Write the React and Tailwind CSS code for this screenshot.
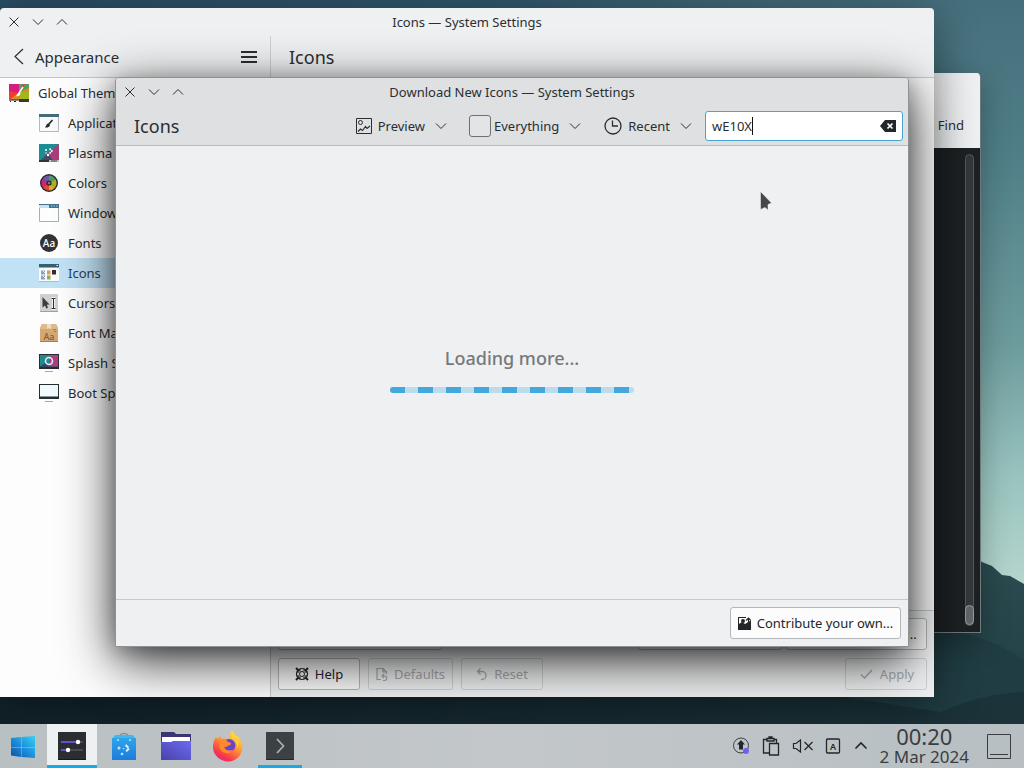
import { useState } from 'react';

function Stroke({ d, className = 'size-4', width = 1, viewBox = '0 0 16 16' }) {
  return (
    <svg viewBox={viewBox} className={className} fill="none" stroke="currentColor" strokeWidth={width} aria-hidden="true">
      <path d={d} />
    </svg>
  );
}

const CHEVRON_DOWN = 'M3 5.5l5 5 5-5';

function Wallpaper() {
  return (
    <svg className="absolute inset-0 size-full" viewBox="0 0 1024 768" preserveAspectRatio="none" aria-hidden="true">
      <defs>
        <linearGradient id="sky" x1="0" y1="0" x2="0" y2="1">
          <stop offset="0" stopColor="#456f7c" />
          <stop offset="0.2" stopColor="#4f7e87" />
          <stop offset="0.45" stopColor="#6d9c9d" />
          <stop offset="0.62" stopColor="#98c3be" />
          <stop offset="0.78" stopColor="#b9d8d0" />
        </linearGradient>
        <linearGradient id="dusk" x1="0" y1="0" x2="1" y2="0">
          <stop offset="0" stopColor="#2a4c63" />
          <stop offset="0.5" stopColor="#2e5369" stopOpacity="0.9" />
          <stop offset="0.95" stopColor="#426a78" stopOpacity="0" />
        </linearGradient>
        <linearGradient id="hill" x1="0" y1="0" x2="0" y2="1">
          <stop offset="0" stopColor="#2b4c50" />
          <stop offset="1" stopColor="#1f3b41" />
        </linearGradient>
        <linearGradient id="ground" x1="0" y1="0" x2="1" y2="0">
          <stop offset="0" stopColor="#12222a" />
          <stop offset="1" stopColor="#1b3339" />
        </linearGradient>
      </defs>
      <rect width="1024" height="768" fill="url(#sky)" />
      <rect width="1024" height="300" fill="url(#dusk)" />
      <path d="M0 600 960 545l22 17 10 4 10 9 8 1 14 8v184H0z" fill="url(#hill)" />
      <path d="M0 640 900 636q40-12 74 0t50 24v108H0z" fill="#203d43" />
      <path d="M0 690h800l140 22q40-18 84-20v76H0z" fill="url(#ground)" />
    </svg>
  );
}

function TitleBar({ title }) {
  return (
    <div className="grid h-7 shrink-0 grid-cols-[1fr_auto_1fr] items-center text-[#2b2f33]">
      <div className="flex pl-0.5">
        <button type="button" aria-label="Close" className="flex w-6 justify-center">
          <Stroke d="m3.5 3.5 9 9m0-9-9 9" />
        </button>
        <button type="button" aria-label="Minimize" className="flex w-6 justify-center">
          <Stroke d={CHEVRON_DOWN} />
        </button>
        <button type="button" aria-label="Maximize" className="flex w-6 justify-center">
          <Stroke d="M3 10.500l5-5 5 5" />
        </button>
      </div>
      <h1>{title}</h1>
    </div>
  );
}

/* Sidebar artwork, all on a 20x18 grid */
function GlobalThemeIcon() {
  return (
    <svg viewBox="0 0 20 18" className="w-5">
      <path d="M0 0h10v9H0z" fill="#d41d7c" />
      <path d="M10 0h10v9H10z" fill="#5a9c5e" />
      <path d="M0 18V7l10 2 4-9h2l-5 9v6H0z" fill="#f03b30" />
      <path d="M0 16 11 8l9-4v14H0z" fill="#dd8a23" />
      <path d="M11 8h9v10h-9z" fill="#a5b51d" />
      <path d="M0 16h10v2H0z" fill="#fff" />
      <path d="M0 16h10" stroke="#2d1b17" />
      <path d="M10 15h10v3H10z" fill="#3d3a16" />
      <path d="M1 17.500h1m3 0h2" stroke="#2d1b17" />
      <path d="m14 3-4 6" stroke="#fff" strokeWidth="1.5" />
      <path d="M10.500 8.500c-2 0-2 2-3.500 3.500 2 .5 4 0 4.500-2.500z" fill="#fff" />
    </svg>
  );
}

function StyleIcon() {
  return (
    <svg viewBox="0 0 20 18" className="w-5">
      <path d="M.5.5h19v17H.5z" fill="#f8f9fa" stroke="#b6babd" />
      <path d="M0 0h20v3H0z" fill="#456c7b" />
      <path d="m13.500 6-4 4.500" stroke="#26292c" strokeWidth="1.700" />
      <path d="M9.500 9.500c-2 0-2 2-3.500 4 2.500.3 4.500-.5 5-2.500z" fill="#26292c" />
    </svg>
  );
}

function PlasmaIcon() {
  return (
    <svg viewBox="0 0 20 18" className="w-5">
      <path d="M0 0h20v18H0z" fill="#1c8d92" />
      <path d="M20 0v18H9l-3-7z" fill="#a83f78" />
      <path d="M0 18 9 9l6 9z" fill="#444a66" />
      <path d="M0 16h20v2H0z" fill="#31333d" />
      <path d="M10 16h10v2H10z" fill="#c9c3cd" />
      <path d="M12 17h6" stroke="#3d3f48" />
      <g fill="#fff">
        <circle cx="7" cy="6" r="1" />
        <circle cx="9" cy="11" r="1.200" />
        <circle cx="7" cy="9" r=".7" />
      </g>
      <path d="m10.500 4.500 2.500 2.500-2.500 2.500" fill="none" stroke="#fff" strokeWidth="1.500" strokeDasharray="2 .6" />
    </svg>
  );
}

function ColorsIcon() {
  return (
    <svg viewBox="0 0 20 18" className="w-5">
      <circle cx="10" cy="9" r="9" fill="#2b2b2f" />
      <path d="M10 9V1.500a7.500 7.500 0 0 1 6.500 3.800z" fill="#4b9b60" />
      <path d="m10 9 6.500-3.700a7.500 7.500 0 0 1 0 7.500z" fill="#a9b32a" />
      <path d="m10 9 6.500 3.800A7.500 7.500 0 0 1 10 16.500z" fill="#e0a726" />
      <path d="M10 9v7.500a7.500 7.500 0 0 1-6.500-3.700z" fill="#e1472e" />
      <path d="m10 9-6.500 3.800a7.500 7.500 0 0 1 0-7.500z" fill="#cf2380" />
      <path d="M10 9 3.500 5.300A7.500 7.500 0 0 1 10 1.500z" fill="#6f57a6" />
      <circle cx="10" cy="9" r="2.600" fill="#2b2b2f" />
      <circle cx="10" cy="9" r="1.200" fill="#89786f" />
    </svg>
  );
}

function WindowIcon() {
  return (
    <svg viewBox="0 0 20 18" className="w-5">
      <path d="M.5.5h19v17H.5z" fill="#fcfdfd" stroke="#a9adb5" />
      <path d="M0 0h20v4H0z" fill="#c6e2ef" />
      <path d="M0 0h10v1H0zM10 0h10v4H10z" fill="#3f7592" />
      <path d="M12 2h1.500m1 0H16m1 0h1.500" stroke="#a9cbdc" />
    </svg>
  );
}

function FontsIcon() {
  return (
    <svg viewBox="0 0 20 18" className="w-5">
      <circle cx="10" cy="9" r="9" fill="#313336" />
      <text x="10" y="12.500" textAnchor="middle" fontSize="10" fontWeight="500" fill="#fff">Aa</text>
    </svg>
  );
}

function IconsIcon() {
  return (
    <svg viewBox="0 0 20 18" className="w-5">
      <path d="M0 0h20v17H0z" fill="#f9fafa" />
      <path d="M0 0h20v3.500H0z" fill="#35606f" />
      <path d="M17.500 1.500h1.500" stroke="#fff" />
      <path d="M2 6.500h4v4H2zm0 5h4v4H2z" fill="#8c9fc4" />
      <path d="m3.500 6.500 2.500 2.500m-2.500 2.500L6 14" stroke="#dfe6f2" />
      <path d="M8 6.500h3.500v4H8z" fill="#d89c57" />
      <path d="M8 11.500h3.500v4H8z" fill="#88b34c" />
      <path d="M13 6h4v4.500h-4z" fill="#3a2932" />
      <path d="M0 17.500h20" stroke="#abc0cc" />
    </svg>
  );
}

function CursorsIcon() {
  return (
    <svg viewBox="0 0 20 18" className="w-5">
      <rect x="1" width="18" height="18" rx="1" fill="#cfd0d2" />
      <path d="M1 17.500h18" stroke="#9fa1a4" />
      <path d="m3.500 3 7 7.500-2.700.3 1.200 3-1.800.7-1.200-3-2.500 2z" fill="#393c40" />
      <path d="M12.500 4.500h4m-4 10h4m-2-10v10" stroke="#fff" strokeWidth="2.500" />
      <path d="M12.500 4.500h4m-4 10h4m-2-10v10" stroke="#2a2c2f" />
    </svg>
  );
}

function FontBoxIcon() {
  return (
    <svg viewBox="0 0 20 18" className="w-5">
      <path d="M3 0h14l2 4v14H1V4z" fill="#d5a775" />
      <path d="M3 0h14l2 5H1z" fill="#dfb98c" />
      <path d="M8 0h4v5l-2-1-2 1z" fill="#f0dcc1" />
      <path d="M1 17.500h18" stroke="#a67e50" />
      <text x="10" y="15.500" textAnchor="middle" fontSize="9" fontWeight="500" fill="#815d3b">Aa</text>
      <path d="M14 5.500h3m-2 2h2" stroke="#a67e50" />
    </svg>
  );
}

function SplashIcon() {
  return (
    <svg viewBox="0 0 20 18" className="w-5">
      <path d="M0 0h20v15H0z" fill="#292c34" />
      <path d="M1 1h18v11.500H1z" fill="#24898b" />
      <path d="M12 1h7v11.500H9z" fill="#b03e80" />
      <path d="m1 12.500 6-4 5 4z" fill="#3d3f6b" />
      <circle cx="10" cy="7" r="3.500" fill="none" stroke="#e8f0f4" strokeWidth="1.500" />
      <path d="M6 17.500h8" stroke="#a4a7ab" />
    </svg>
  );
}

function BootIcon() {
  return (
    <svg viewBox="0 0 20 18" className="w-5">
      <path d="M0 0h20v15H0z" fill="#272d32" />
      <path d="M1 1h18v11.500H1z" fill="#f0fafa" />
      <path d="M6 17.500h8" stroke="#a4a7ab" />
    </svg>
  );
}

const PAGES = [
  { name: 'Application Style', Icon: StyleIcon },
  { name: 'Plasma Style', Icon: PlasmaIcon },
  { name: 'Colors', Icon: ColorsIcon },
  { name: 'Window Decorations', Icon: WindowIcon },
  { name: 'Fonts', Icon: FontsIcon },
  { name: 'Icons', Icon: IconsIcon },
  { name: 'Cursors', Icon: CursorsIcon },
  { name: 'Font Management', Icon: FontBoxIcon },
  { name: 'Splash Screen', Icon: SplashIcon },
  { name: 'Boot Splash Screen', Icon: BootIcon },
];

function Sidebar() {
  return (
    <nav className="flex w-[270px] shrink-0 flex-col overflow-hidden bg-[#fdfdfd]">
      <a href="#global" className="flex h-[30px] items-center gap-[9px] pl-[9px]">
        <GlobalThemeIcon />
        Global Theme
      </a>
      {PAGES.map(({ name, Icon }) => (
        <a
          key={name}
          href="#page"
          className={`flex h-[30px] items-center gap-[9px] pl-[39px] ${
            name === 'Icons' ? 'bg-[#c1e1f4] text-[#1d3f5e]' : ''
          }`}
        >
          <Icon />
          {name}
        </a>
      ))}
    </nav>
  );
}

function Button({ children, disabled, className = '' }) {
  return (
    <button
      type="button"
      disabled={disabled}
      className={`flex h-8 items-center justify-center gap-1.5 rounded-[3px] border ${
        disabled ? 'border-[#ced0d2] text-[#a7a9ab]' : 'border-[#b4b7b9] bg-[#fcfcfc] text-[#232629]'
      } ${className}`}
    >
      {children}
    </button>
  );
}

function HelpIcon() {
  return (
    <svg viewBox="0 0 14 14" className="size-3.5" fill="none" stroke="currentColor" aria-hidden="true">
      <circle cx="7" cy="7" r="5.500" strokeWidth="1.200" />
      <circle cx="7" cy="7" r="2.500" />
      <path d="m1 1 3 3m9-3-3 3M1 13l3-3m9 3-3-3" strokeWidth="2" />
      <path d="M5 1.500v3m4-3v3M5 9.500v3m4-3v3M1.500 5h3m-3 4h3m5-4h3m-3 4h3" />
    </svg>
  );
}

function SettingsWindow() {
  return (
    <section className="absolute top-2 right-[90px] bottom-[27px] left-0 flex flex-col overflow-hidden rounded-t-[4px] bg-[#eff0f1] shadow-[0_8px_44px_rgba(0,0,0,0.4)]">
      <TitleBar title="Icons — System Settings" />
      <header className="flex h-[42px] shrink-0 items-stretch border-b border-[#c4c6c8]">
        <div className="flex w-[270px] items-center pr-[13px] pl-[11px]">
          <button type="button" className="flex items-center gap-2 text-[15px]">
            <Stroke d="M12 1 4 8.500l8 7.500" viewBox="0 0 16 17" width={1.2} className="h-[17px] w-4" />
            Appearance
          </button>
          <button type="button" aria-label="Menu" className="ml-auto">
            <Stroke d="M0 3h16M0 8h16M0 13h16" width={2} />
          </button>
        </div>
        <h2 className="flex flex-1 items-center border-l border-[#cdcfd1] pl-[18px] text-lg">Icons</h2>
      </header>
      <div className="flex min-h-0 flex-1">
        <Sidebar />
        <div className="flex flex-1 flex-col border-l border-[#c4c6c8]">
          <div className="flex-1 bg-[#f7f7f7]" />
          <footer className="flex flex-col gap-2 border-t border-[#c4c6c8] px-[7px] py-[7px]">
            <div className="flex gap-1">
              <Button className="w-[164px]">Configure Icon Sizes</Button>
              <Button className="ml-auto w-[144px]">Install from File...</Button>
              <Button className="w-[141px]">
                <Stroke d="M8 2v8M4.500 7 8 10.500 11.500 7M2 13.500h12" />
                Get New Icons...
              </Button>
            </div>
            <div className="flex gap-2">
              <Button className="w-[82px]">
                <HelpIcon />
                Help
              </Button>
              <Button disabled className="w-[85px]">
                <svg viewBox="0 0 12 14" className="w-3" fill="none" stroke="currentColor" strokeWidth="1.200" aria-hidden="true">
                  <path d="M5 12.500H1v-11h6l3.500 3.500v2M7 1.500V5h3.500" />
                  <path d="M7 13.500h1.500a2 2 0 0 0 0-4.500H6m2-2L6 9l2 2" />
                </svg>
                Defaults
              </Button>
              <Button disabled className="w-[82px]">
                <svg viewBox="0 0 12 14" className="w-3" fill="none" stroke="currentColor" strokeWidth="1.300" aria-hidden="true">
                  <path d="M4.500 1.500 1.500 4.500l3 3M1.500 4.500H6a4 4 0 0 1 0 8H5" />
                </svg>
                Reset
              </Button>
              <Button disabled className="ml-auto w-[82px]">
                <Stroke d="m3 8.500 3.500 3.500L14 4" width={1.5} />
                Apply
              </Button>
            </div>
          </footer>
        </div>
      </div>
    </section>
  );
}

function TerminalWindow() {
  return (
    <section className="absolute top-[73px] right-[43px] bottom-[91px] left-[188px] flex flex-col overflow-hidden rounded-t-[4px] border-r border-b border-[#6f7b7c] bg-[#1d2123] shadow-[0_8px_30px_rgba(0,0,0,0.3)]">
      <header className="flex h-[75px] shrink-0 items-end justify-end bg-[#eff0f1] pr-4 pb-[13px]">
        <button type="button">Find</button>
      </header>
      <div className="flex flex-1 justify-end pt-1.5 pr-1.5 pb-1.5">
        <div className="flex w-[9px] flex-col justify-end rounded-full border border-[#54585a] bg-[#34383a]">
          <div className="-mx-px h-5 rounded-full border border-[#989b9c] bg-[#62676a]" />
        </div>
      </div>
    </section>
  );
}

function DownloadDialog() {
  const [query, setQuery] = useState('wE10X');
  const [everything, setEverything] = useState(false);

  return (
    <section className="absolute inset-x-[115px] top-[77px] bottom-[77px] flex flex-col overflow-hidden rounded-t-[4px] border border-[#8f9294] bg-[#eff0f1] shadow-[0_14px_52px_rgba(0,0,0,0.8),0_4px_20px_rgba(0,0,0,0.25)]">
      <div className="shrink-0 border-b border-[#b9bbbd] bg-[#dee0e2]">
        <TitleBar title="Download New Icons — System Settings" />
        <div className="flex h-[39px] items-center pr-[5px] pl-[18px]">
          <h2 className="mr-auto text-lg">Icons</h2>
          <button type="button" className="flex items-center gap-1.5">
            <svg viewBox="0 0 16 16" className="size-4" fill="none" stroke="currentColor" aria-hidden="true">
              <path d="M.5.5h15v15H.5z" />
              <circle cx="4.500" cy="4.500" r="2" />
              <path d="M2 13.500 4.500 11l2 1.500 3-4 1.500 2 3-2.500" strokeWidth="1.200" />
            </svg>
            Preview
            <Stroke d={CHEVRON_DOWN} className="ml-0.5 size-4" />
          </button>
          <div className="ml-5 flex items-center gap-1.5">
            <label className="flex items-center gap-[3px]">
              <input
                type="checkbox"
                checked={everything}
                onChange={(e) => setEverything(e.target.checked)}
                className="size-[22px] appearance-none rounded-[3px] border border-[#6d7173] bg-[#e2e4e5] checked:bg-[#3daee9]"
              />
              Everything
            </label>
            <button type="button" aria-label="Category" className="ml-0.5">
              <Stroke d={CHEVRON_DOWN} />
            </button>
          </div>
          <button type="button" className="ml-[21px] flex items-center gap-1.5">
            <svg viewBox="0 0 18 18" className="size-[18px]" fill="none" stroke="currentColor" strokeWidth="1.300" aria-hidden="true">
              <circle cx="9" cy="9" r="8" />
              <path d="M8.500 3.500V9H14" />
            </svg>
            Recent
            <Stroke d={CHEVRON_DOWN} className="ml-0.5 size-4" />
          </button>
          <div className="ml-[11px] flex h-[30px] w-[198px] items-center rounded-[3px] border border-[#48a5d6] bg-white px-1.5">
            <input
              type="text"
              aria-label="Search"
              value={query}
              onChange={(e) => setQuery(e.target.value)}
              className="field-sizing-content min-w-0 caret-transparent outline-none"
            />
            <span className="h-[18px] w-px bg-[#111]" />
            <button type="button" aria-label="Clear" className="ml-auto">
              <svg viewBox="0 0 16 12" className="w-4" aria-hidden="true">
                <path d="M5 0h11v12H5L0 6z" fill="#232629" />
                <path d="m7.500 3.500 5 5m0-5-5 5" stroke="#fff" strokeWidth="1.700" />
              </svg>
            </button>
          </div>
        </div>
      </div>

      <div className="flex flex-1 flex-col items-center justify-center gap-[17px] pb-1.5">
        <p className="text-lg leading-6 font-medium text-[#76797b]">Loading more...</p>
        <div
          role="progressbar"
          aria-label="Loading more"
          className="h-1.5 w-[244px] rounded-full bg-[repeating-linear-gradient(90deg,#45a8dc_0px,#45a8dc_15px,#bcdcee_15px,#bcdcee_28px)]"
        />
      </div>

      <footer className="flex h-[47px] shrink-0 items-center justify-end border-t border-[#c6c8ca] pr-[7px]">
        <Button className="w-[171px]">
          <svg viewBox="0 0 13 13" className="size-[13px]" aria-hidden="true">
            <path d="M0 0h8v1H1v6l3-2 3 2 5-3h1v9H0z" fill="currentColor" />
            <circle cx="5" cy="4" r="2" fill="currentColor" />
            <path d="M10.500 7V1M8 3.500 10.500 1 13 3.500" fill="none" stroke="currentColor" strokeWidth="1.200" />
          </svg>
          Contribute your own...
        </Button>
      </footer>
    </section>
  );
}

function StartIcon() {
  return (
    <svg viewBox="0 0 24 22" className="w-6">
      <defs>
        <linearGradient id="start" x1="0" y1="1" x2="1" y2="0">
          <stop offset="0" stopColor="#0a4fa0" />
          <stop offset="0.5" stopColor="#1e8fdc" />
          <stop offset="1" stopColor="#36d0f2" />
        </linearGradient>
      </defs>
      <path d="m0 2 10-1v10H0zm10.500-1L24 0v11H10.500zM0 11.500h10V21L0 19.500zm10.500 0H24V22l-13.500-1z" fill="url(#start)" />
    </svg>
  );
}

function SlidersIcon() {
  return (
    <svg viewBox="0 0 28 28" className="size-7">
      <path d="M0 0h28v28H0z" fill="#2c2d32" />
      <path d="M0 27.500h28" stroke="#18191c" />
      <path d="M3 10h17" stroke="#5b56c9" strokeWidth="2" />
      <path d="M20 10h5M10 18h15" stroke="#66686c" />
      <path d="M3 18h7" stroke="#5b56c9" strokeWidth="2" />
      <circle cx="20" cy="10" r="2.200" fill="#fff" />
      <circle cx="10" cy="18" r="2.200" fill="#fff" />
    </svg>
  );
}

function DiscoverIcon() {
  return (
    <svg viewBox="0 0 28 28" className="size-7">
      <defs>
        <linearGradient id="bag" x1="0" y1="0" x2="0" y2="1">
          <stop offset="0" stopColor="#2fa5ea" />
          <stop offset="1" stopColor="#1d7bdc" />
        </linearGradient>
      </defs>
      <path d="M8 6c1-6 11-6 12 0" fill="none" stroke="#75868f" />
      <path d="m3 6 2-3h18l2 3z" fill="#42b6ee" />
      <path d="M2 6h24v22H2z" fill="url(#bag)" />
      <path d="m15.500 13 3.500 3.500-3.500 3.500" fill="none" stroke="#d8f1ff" strokeWidth="2" strokeDasharray="4 1" />
      <g fill="#bfe5fb">
        <circle cx="9" cy="16" r="1.500" />
        <circle cx="12" cy="22" r="1.300" />
        <circle cx="13.500" cy="16.500" r=".8" />
        <circle cx="8" cy="8" r="1" />
        <circle cx="20" cy="8" r="1" />
      </g>
    </svg>
  );
}

function FolderIcon() {
  return (
    <svg viewBox="0 0 30 28" className="w-[30px]">
      <defs>
        <linearGradient id="folder" x1="0" y1="1" x2="1" y2="0">
          <stop offset="0" stopColor="#4743a8" />
          <stop offset="1" stopColor="#6d6af2" />
        </linearGradient>
      </defs>
      <path d="M0 0h13l2 2h15v12H0z" fill="#393575" />
      <path d="M1 5h28v7H1z" fill="#fff" />
      <path d="M0 10h10l2-1h18v19H0z" fill="url(#folder)" />
    </svg>
  );
}

function FirefoxIcon() {
  return (
    <svg viewBox="0 0 32 32" className="size-8">
      <defs>
        <linearGradient id="fox" x1="0.8" y1="0" x2="0.2" y2="1">
          <stop offset="0" stopColor="#ffe94a" />
          <stop offset="0.45" stopColor="#ff9330" />
          <stop offset="0.8" stopColor="#f8354e" />
          <stop offset="1" stopColor="#e0257f" />
        </linearGradient>
      </defs>
      <path d="M20 .5c2 2 3 4 3.500 6.500L26 6c4 5 6 12 3 17.500C26 29 21 31.500 16 31.500 8 31.500 1 25 1 17c0-4 1-7 3-10l1.500 2L8 6l2 3c3-1 5-.5 7 1 0-4 1-7 3-9.500z" fill="url(#fox)" />
      <circle cx="17" cy="15.500" r="6.500" fill="#6e42c9" />
      <path d="M10 9c3 0 5 1 6 3 2 0 3 1 3 2-1 2-3 1-4 2.500-1 1-2 1-3 0 1 4 5 5 9 3-2 5-11 5-13-1-1-3 0-6 2-9.500z" fill="#ff8a2c" />
      <path d="M19 8c4 1 7 5 6 10 4-6 1-12-4-15z" fill="#ffd23c" />
    </svg>
  );
}

function TerminalIcon() {
  return (
    <svg viewBox="0 0 28 28" className="size-7">
      <path d="M0 0h28v28H0z" fill="#3c4144" />
      <path d="M0 27.500h28" stroke="#24282a" />
      <path d="m11 7 6.500 7-6.500 7" fill="none" stroke="#aeb2b4" strokeWidth="1.700" />
    </svg>
  );
}

const TASKS = [
  { name: 'System Settings', Icon: SlidersIcon, state: 'bg-[#eef1f2] border-[#17a9e8]' },
  { name: 'Discover', Icon: DiscoverIcon, state: 'border-transparent' },
  { name: 'Files', Icon: FolderIcon, state: 'border-transparent' },
  { name: 'Firefox', Icon: FirefoxIcon, state: 'border-transparent' },
  { name: 'Terminal', Icon: TerminalIcon, state: 'border-[#17a9e8]' },
];

function Taskbar() {
  return (
    <div className="relative flex h-11 shrink-0 items-stretch bg-linear-to-r from-[#b9c0c2] via-[#c3c7ca] to-[#b7bfc2]">
      <button type="button" aria-label="Start" className="flex w-[46px] items-center justify-center pt-0.5">
        <StartIcon />
      </button>
      {TASKS.map(({ name, Icon, state }) => (
        <button
          key={name}
          type="button"
          aria-label={name}
          className={`flex items-center justify-center border-b-[3px] pt-[3px] ${state} ${
            name === 'Terminal' ? 'mx-1 w-11' : 'mx-px w-[50px]'
          }`}
        >
          <Icon />
        </button>
      ))}
      <div className="ml-auto flex items-center gap-3 text-[#232629]">
        <button type="button" aria-label="Updates">
          <svg viewBox="0 0 18 18" className="size-[18px]">
            <circle cx="9" cy="8.500" r="7.500" fill="none" stroke="#3b3f42" />
            <path d="m9 3 4 4.500h-2v5H7v-5H5z" fill="#232629" />
            <circle cx="14" cy="14" r="3" fill="#6a63f2" />
          </svg>
        </button>
        <button type="button" aria-label="Clipboard">
          <svg viewBox="0 0 18 20" className="w-[18px]" fill="none" stroke="currentColor" strokeWidth="1.300">
            <path d="M7 17H1.500V3.500H5M12 3.500h2.500V7M5 2.500h7v2.500H5zM7 2.500V1h3v1.500" />
            <path d="M7.500 7.500h9V19h-9z" />
          </svg>
        </button>
        <button type="button" aria-label="Volume muted">
          <svg viewBox="0 0 22 16" className="w-[22px]" fill="none" stroke="currentColor" strokeWidth="1.200">
            <path d="M1.500 5.500H4L8.500 2v12L4 10.500H1.500z" />
            <path d="m12.500 4 8 8m0-8-8 8" />
          </svg>
        </button>
        <button type="button" aria-label="Keyboard layout" className="-ml-px">
          <svg viewBox="0 0 16 16" className="size-4">
            <rect x="1.500" y="1" width="13" height="14" rx="1" fill="none" stroke="currentColor" strokeWidth="1.300" />
            <text x="8" y="11.500" textAnchor="middle" fontSize="9" fontWeight="600" fill="currentColor">A</text>
          </svg>
        </button>
        <button type="button" aria-label="Show hidden icons">
          <Stroke d="M2.500 10.500 8 5l5.500 5.500" width={1.6} />
        </button>
      </div>
      <div className="ml-[11px] flex flex-col items-center justify-center text-[#3a3e41]">
        <time className="text-[22px] leading-[22px]">00:20</time>
        <span className="text-[17px] leading-5">2 Mar 2024</span>
      </div>
      <button type="button" aria-label="Show desktop" className="mr-[13px] ml-[18px]">
        <svg viewBox="0 0 24 25" className="w-6" fill="none" stroke="#3a3e41">
          <path d="M.5.5h23v24H.5zM3 20.500h18" />
        </svg>
      </button>
    </div>
  );
}

export default function App() {
  return (
    <div className="relative flex h-screen flex-col overflow-hidden bg-[#1b3339] font-['Noto_Sans',sans-serif] text-[13px] leading-5 text-[#2a2e32]">
      <Wallpaper />
      <main className="relative min-h-0 flex-1 overflow-hidden">
        <TerminalWindow />
        <SettingsWindow />
        <DownloadDialog />
        <svg viewBox="0 0 12 20" className="absolute top-[191px] left-[760px] w-3" aria-hidden="true">
          <path d="M.5.500 11.500 12l-3.500 1.500v5.500l-3-2.500-4.500 2z" fill="#44484b" stroke="#f4f4f4" strokeWidth=".5" />
        </svg>
      </main>
      <Taskbar />
    </div>
  );
}
